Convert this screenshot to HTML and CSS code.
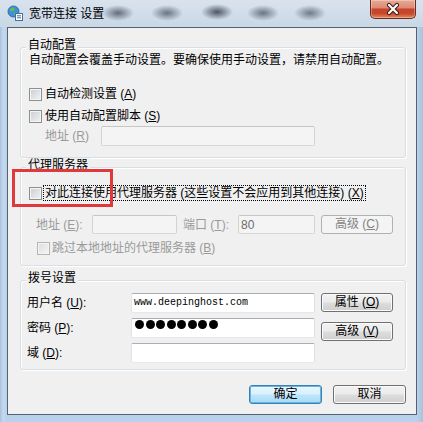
FILE: index.html
```html
<!DOCTYPE html>
<html lang="zh-CN">
<head>
<meta charset="utf-8">
<title>宽带连接 设置</title>
<link rel="stylesheet" href="styles.css">
</head>
<body>
<div class="window">
  <div class="titlebar">
    <svg class="app-icon" viewBox="0 0 16 16" width="16" height="16">
      <circle cx="6.5" cy="6.5" r="5.5" fill="#3f8fd8" stroke="#1f5f9e" stroke-width="0.8"/>
      <path d="M2.6 4.2 Q4.6 1.8 7 2.6 L7.8 4.6 L6 6.6 L3.8 6 Z" fill="#63b85a"/>
      <path d="M6.8 8 L9.6 7.6 L9 10.6 L7.2 10.2 Z" fill="#63b85a"/>
      <rect x="8.5" y="8.5" width="7" height="7" fill="#ffffff" stroke="#4a6d95" stroke-width="1"/>
      <path d="M10 10.8h4M10 12.8h4" stroke="#2f6fb5" stroke-width="1"/>
    </svg>
    <span class="title">宽带连接 设置</span>
    <div class="close">
      <svg viewBox="0 0 46 19" width="46" height="19">
        <path d="M19 5 L27 13 M27 5 L19 13" stroke="#3b1a14" stroke-width="4.2" stroke-linecap="round"/>
        <path d="M19 5 L27 13 M27 5 L19 13" stroke="#ffffff" stroke-width="2.2" stroke-linecap="round"/>
      </svg>
    </div>
  </div>

  <div class="panel">
    <div class="group g1">
      <div class="group-title">自动配置</div>
      <div class="desc">自动配置会覆盖手动设置。要确保使用手动设置，请禁用自动配置。</div>
      <div class="check-row r1"><span class="cb"></span><span class="cb-label">自动检测设置 (<u>A</u>)</span></div>
      <div class="check-row r2"><span class="cb"></span><span class="cb-label">使用自动配置脚本 (<u>S</u>)</span></div>
      <div class="field-row r3">
        <span class="lbl disabled lbl-r">地址 (<u>R</u>)</span>
        <span class="input disabled w-addr-r"></span>
      </div>
    </div>

    <div class="group g2">
      <div class="group-title">代理服务器</div>
      <div class="check-row r1"><span class="cb"></span><span class="focus-label">对此连接使用代理服务器 (这些设置不会应用到其他连接) (<u>X</u>)</span></div>
      <div class="field-row r2">
        <span class="lbl disabled lbl-e">地址 (<u>E</u>):</span>
        <span class="input disabled w-addr-e"></span>
        <span class="lbl disabled lbl-t">端口 (<u>T</u>):</span>
        <span class="input disabled w-port"><span class="port-val">80</span></span>
        <span class="btn btn-disabled btn-adv-c">高级 (<u>C</u>)</span>
      </div>
      <div class="check-row r3"><span class="cb cb-disabled"></span><span class="cb-label disabled">跳过本地地址的代理服务器 (<u>B</u>)</span></div>
    </div>

    <div class="group g3">
      <div class="group-title">拨号设置</div>
      <div class="dial-grid">
        <span class="lbl">用户名 (<u>U</u>):</span>
        <span class="input"><span class="mono">www.deepinghost.com</span></span>
        <span class="btn grid-btn">属性 (<u>O</u>)</span>
        <span class="lbl">密码 (<u>P</u>):</span>
        <span class="input pw"><span class="dot"></span><span class="dot"></span><span class="dot"></span><span class="dot"></span><span class="dot"></span><span class="dot"></span><span class="dot"></span><span class="dot"></span></span>
        <span class="btn grid-btn btn-adv-v">高级 (<u>V</u>)</span>
        <span class="lbl">域 (<u>D</u>):</span>
        <span class="input"></span>
        <span></span>
      </div>
    </div>

    <div class="footer">
      <span class="btn btn-default">确定</span>
      <span class="btn">取消</span>
    </div>
  </div>

  <div class="highlight"></div>
</div>
</body>
</html>
```
FILE: styles.css
```css
* { box-sizing: border-box; }
html, body { margin: 0; padding: 0; }
body {
  width: 423px;
  height: 422px;
  overflow: hidden;
  background: #bcd3ea;
  font-family: "Liberation Sans", "Noto Sans CJK SC", sans-serif;
  font-size: 12px;
  line-height: 14px;
  color: #000;
}
u { text-decoration: underline; text-underline-offset: 1px; }

.window {
  position: relative;
  width: 423px;
  height: 422px;
  display: flex;
  flex-direction: column;
  background: linear-gradient(to right, #a7c0dc 0, #c4d9ef 3px, #b9d1ea 7px, #b9d1ea calc(100% - 6px), #a9c2de 100%);
}

.titlebar {
  height: 27px;
  flex: none;
  display: flex;
  align-items: flex-start;
  background:
    radial-gradient(ellipse 16px 8px at 118px 13px, rgba(70,80,95,.8), rgba(70,80,95,0)),
    radial-gradient(ellipse 16px 8px at 167px 13px, rgba(70,80,95,.75), rgba(70,80,95,0)),
    radial-gradient(ellipse 16px 8px at 217px 12px, rgba(60,70,85,.9), rgba(60,70,85,0)),
    radial-gradient(ellipse 16px 8px at 263px 13px, rgba(70,80,95,.75), rgba(70,80,95,0)),
    radial-gradient(ellipse 16px 8px at 310px 13px, rgba(70,80,95,.7), rgba(70,80,95,0)),
    linear-gradient(#d9e3ee, #c9d7e6);
}
.app-icon { flex: none; margin: 5px 0 0 7px; }
.title { margin: 6px 0 0 6px; line-height: 16px; font-size: 12px; }
.close {
  margin-left: auto;
  margin-right: 7px;
  width: 46px;
  height: 19px;
  border: 1px solid #6b2b20;
  border-top: none;
  border-radius: 0 0 5px 5px;
  background: linear-gradient(#e9a997 0%, #dc8b75 42%, #c5442b 52%, #c9482c 75%, #e08a5c 100%);
  box-shadow: inset 0 0 0 1px rgba(255,255,255,.3);
  display: flex;
  align-items: center;
  justify-content: center;
  overflow: hidden;
}
.close svg { display: block; flex: none; }

.panel {
  flex: 1;
  margin: 0 6px 7px 7px;
  border: 1px solid #56626f;
  background: #f0f0f0;
  display: flex;
  flex-direction: column;
}

.group {
  flex: none;
  margin: 0 10px 0 12px;
  border: 1px solid #d5dfe5;
  border-radius: 3px;
  box-shadow: inset 1px 1px 0 #fff, 1px 1px 0 #fff;
  padding-left: 8px;
}
.g1 { margin-top: 19px; height: 111px; }
.g2 { margin-top: 9px; height: 99px; }
.g3 { margin-top: 14px; height: 90px; }

.group-title {
  margin: -10px 0 0 -3px;
  padding: 0 2px;
  width: max-content;
  background: #f0f0f0;
}
.desc { margin-top: 1px; }

.check-row { display: flex; align-items: center; height: 14px; }
.field-row { display: flex; align-items: stretch; }
.field-row .lbl { align-self: center; white-space: nowrap; }

.cb {
  flex: none;
  width: 13px;
  height: 13px;
  border: 1px solid #8e8f8f;
  background: linear-gradient(135deg, #c9cdd2, #f3f3f4);
  box-shadow: inset 0 0 0 1px #f4f4f4;
}
.cb-disabled { border-color: #b5b5b5; background: linear-gradient(135deg, #dcdde0, #f5f5f5); }
.cb-label { margin-left: 3px; white-space: nowrap; }
.disabled { color: #9a9a9a; }

.g1 .r1 { margin-top: 20px; }
.g1 .r2 { margin-top: 8px; }
.g1 .r3 { margin-top: 3px; height: 20px; }
.lbl-r { width: 56px; margin-left: 16px; }
.w-addr-r { width: 214px; }

.input {
  display: flex;
  align-items: center;
  border: 1px solid;
  border-color: #abadb3 #dbdfe6 #e3e9ef #e2e3ea;
  border-radius: 2px;
  background: #fff;
}
.input.disabled { background: #f4f4f4; border-color: #c6c6c6 #d3d3d3 #d8d8d8 #d3d3d3; }

.g2 .r1 { margin-top: 13px; height: 16px; }
.focus-label {
  margin-left: 1px;
  border: 1px dotted #000;
  padding: 0 1px;
  line-height: 14px;
  white-space: nowrap;
}
.g2 .r2 { margin-top: 14px; height: 19px; }
.lbl-e { width: 56px; margin-left: 7px; }
.w-addr-e { width: 85px; }
.lbl-t { width: 55px; margin-left: 6px; }
.w-port { width: 77px; padding-left: 2px; }
.port-val { color: #6d6d6d; }
.btn-adv-c { margin-left: 6px; width: 72px; }
.g2 .r3 { margin-top: 7px; }
.g2 .r3 .cb { margin-left: 8px; }
.g2 .r3 .cb-label { margin-left: 2px; }

.btn {
  display: block;
  height: 19px;
  border: 1px solid #707070;
  border-radius: 3px;
  background: linear-gradient(#f2f2f2 0%, #ebebeb 48%, #dddddd 52%, #cfcfcf 100%);
  box-shadow: inset 0 0 0 1px #fbfbfb;
  text-align: center;
  line-height: 17px;
  white-space: nowrap;
}
.btn-disabled {
  border-color: #adb2b5;
  background: #f4f4f4;
  box-shadow: none;
  color: #838383;
}
.btn-default {
  border-color: #3c7fb1;
  background: linear-gradient(#eaf6fd 0%, #d9f0fc 48%, #bee6fd 52%, #a7d9f5 100%);
  box-shadow: inset 0 0 0 1px #62b6e4;
}

.dial-grid {
  margin: 8px 0 0 -2px;
  display: grid;
  grid-template-columns: 98px 184px 72px;
  grid-template-rows: 20px 20px 20px;
  column-gap: 6px;
  row-gap: 5px;
}
.dial-grid .lbl { align-self: center; white-space: nowrap; }
.grid-btn { align-self: start; }
.btn-adv-v { margin-top: 4px; }
.mono {
  padding-left: 2px;
  font-family: "Liberation Mono", monospace;
  font-size: 10px;
  line-height: 16px;
}
.pw { align-items: flex-start; padding: 1px 0 0 3px; gap: 1.5px; }
.dot {
  flex: none;
  width: 9px;
  height: 9px;
  border-radius: 50%;
  background: #000;
}

.footer {
  display: flex;
  justify-content: flex-end;
  gap: 11px;
  margin: 15px 10px 0 0;
}
.footer .btn { width: 73px; }

.highlight {
  position: absolute;
  left: 12px;
  top: 169px;
  width: 101px;
  height: 38px;
  border: 3px solid #e0383b;
  pointer-events: none;
}
```
